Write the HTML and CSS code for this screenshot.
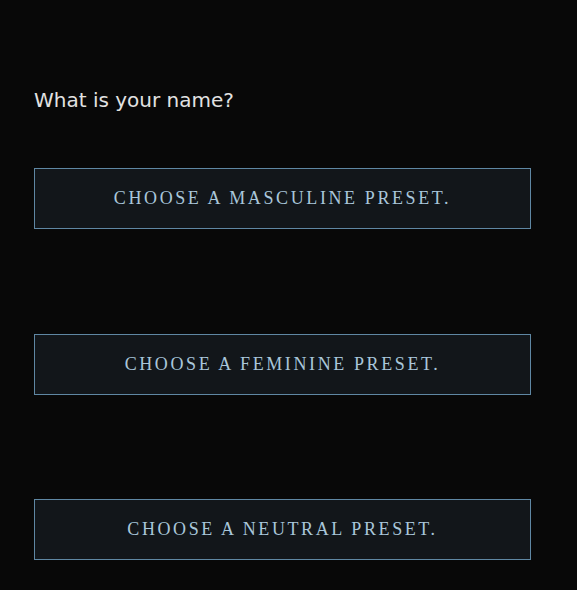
FILE: index.html
```html
<!DOCTYPE html>
<html lang="en">
<head>
<meta charset="utf-8">
<link rel="stylesheet" href="styles.css">
</head>
<body>
<main class="page">
  <p class="question">What is your name?</p>
  <div class="choices">
    <button class="preset">Choose a masculine preset.</button>
    <button class="preset">Choose a feminine preset.</button>
    <button class="preset">Choose a neutral preset.</button>
  </div>
</main>
</body>
</html>
```
FILE: styles.css
```css
html, body {
  margin: 0;
  padding: 0;
  background: #080808;
  height: 100%;
}
.page {
  padding: 87px 0 0 34px;
  width: 497px;
}
.question {
  margin: 0;
  font-family: "DejaVu Sans", "Noto Sans", sans-serif;
  font-size: 20px;
  line-height: 26px;
  color: #e2e2e2;
}
.choices {
  margin-top: 55px;
  display: flex;
  flex-direction: column;
  gap: 104.6px;
}
.preset {
  display: block;
  width: 497px;
  height: 61px;
  box-sizing: border-box;
  background: #12161a;
  border: 1px solid #5f87a3;
  color: #a9c6da;
  font-family: "Liberation Serif", "DejaVu Serif", serif;
  font-size: 18px;
  letter-spacing: 2.6px;
  text-transform: uppercase;
  text-align: center;
  padding: 0;
  cursor: pointer;
}
```
